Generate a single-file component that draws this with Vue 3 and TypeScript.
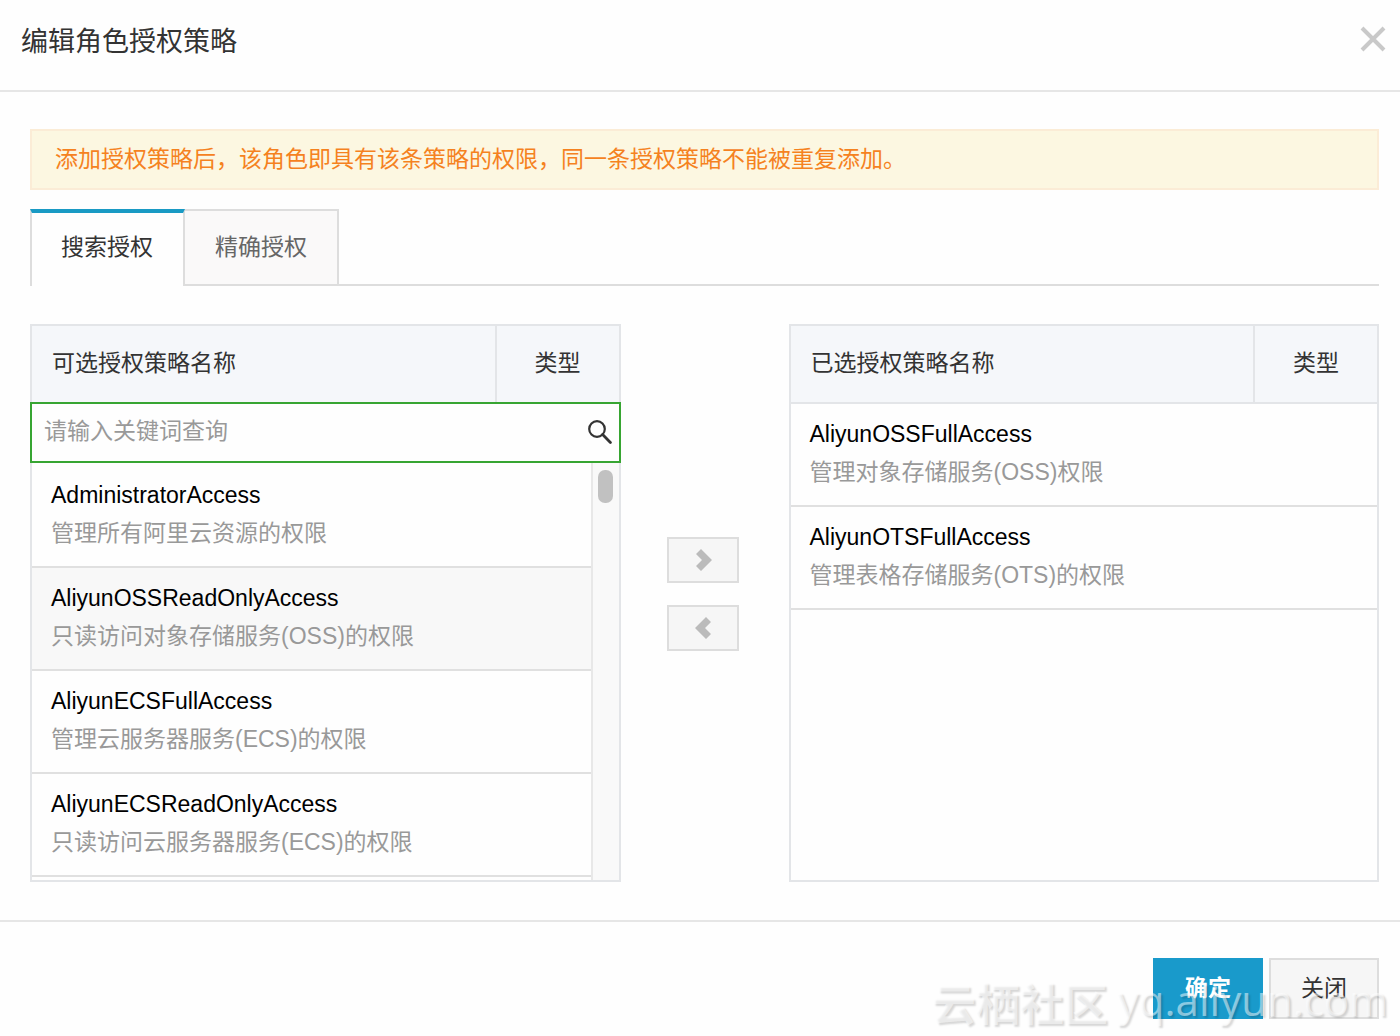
<script setup lang="ts">
import { ref } from 'vue'

interface Policy {
  name: string
  desc: string
}

const tabs: string[] = ['搜索授权', '精确授权']
const activeTab = ref(0)
const keyword = ref('')
const highlighted = ref('AliyunOSSReadOnlyAccess')

const available: Policy[] = [
  { name: 'AdministratorAccess', desc: '管理所有阿里云资源的权限' },
  { name: 'AliyunOSSReadOnlyAccess', desc: '只读访问对象存储服务(OSS)的权限' },
  { name: 'AliyunECSFullAccess', desc: '管理云服务器服务(ECS)的权限' },
  { name: 'AliyunECSReadOnlyAccess', desc: '只读访问云服务器服务(ECS)的权限' },
]

const selected: Policy[] = [
  { name: 'AliyunOSSFullAccess', desc: '管理对象存储服务(OSS)权限' },
  { name: 'AliyunOTSFullAccess', desc: '管理表格存储服务(OTS)的权限' },
]
</script>

<template>
  <div class="dialog" role="dialog" aria-labelledby="dialog-title">
    <header class="header">
      <h1 id="dialog-title">编辑角色授权策略</h1>
      <button class="close" type="button" aria-label="关闭窗口">
        <svg width="26" height="26" viewBox="0 0 26 26" fill="none" stroke="#c9c9c9" stroke-width="4">
          <path d="M2 2L24 24M24 2L2 24" />
        </svg>
      </button>
    </header>

    <main class="body">
      <p class="notice">添加授权策略后，该角色即具有该条策略的权限，同一条授权策略不能被重复添加。</p>

      <div class="tabs" role="tablist">
        <button
          v-for="(tab, i) in tabs"
          :key="tab"
          type="button"
          role="tab"
          :aria-selected="activeTab === i"
          :class="['tab', { active: activeTab === i }]"
          @click="activeTab = i"
        >{{ tab }}</button>
      </div>

      <div class="transfer">
        <section class="panel scrolling">
          <table>
            <thead>
              <tr>
                <th scope="col" class="name-col">可选授权策略名称</th>
                <th scope="col" class="type-col">类型</th>
              </tr>
              <tr>
                <td class="search" colspan="2">
                  <input v-model="keyword" type="text" placeholder="请输入关键词查询" aria-label="请输入关键词查询" />
                  <button type="button" class="search-btn" aria-label="查询">
                    <svg width="24" height="24" viewBox="0 0 24 24" fill="none" stroke="#333">
                      <circle cx="9" cy="9" r="7.8" stroke-width="2.2" />
                      <path d="M14.6 14.6L22.4 22.4" stroke-width="2.8" stroke-linecap="round" />
                    </svg>
                  </button>
                </td>
              </tr>
            </thead>
            <tbody>
              <tr v-for="p in available" :key="p.name" :class="{ hovered: p.name === highlighted }">
                <td class="policy">
                  <div class="policy-name">{{ p.name }}</div>
                  <div class="policy-desc">{{ p.desc }}</div>
                </td>
              </tr>
            </tbody>
          </table>
          <div class="track"><div class="thumb"></div></div>
        </section>

        <div class="moves">
          <button type="button" aria-label="添加">
            <svg width="18" height="22" viewBox="0 0 18 22" fill="#bbb">
              <path d="M7 0L18 11L7 22L2 17L8 11L2 5Z" />
            </svg>
          </button>
          <button type="button" aria-label="移除">
            <svg width="16" height="22" viewBox="0 0 16 22" fill="#bbb">
              <path d="M11 0L0 11L11 22L16 17L10 11L16 5Z" />
            </svg>
          </button>
        </div>

        <section class="panel">
          <table>
            <thead>
              <tr class="ruled">
                <th scope="col" class="name-col">已选授权策略名称</th>
                <th scope="col" class="type-col">类型</th>
              </tr>
            </thead>
            <tbody>
              <tr v-for="p in selected" :key="p.name">
                <td class="policy">
                  <div class="policy-name">{{ p.name }}</div>
                  <div class="policy-desc">{{ p.desc }}</div>
                </td>
              </tr>
            </tbody>
          </table>
        </section>
      </div>
    </main>

    <footer class="footer">
      <button type="button" class="btn primary">确定</button>
      <button type="button" class="btn">关闭</button>
    </footer>

    <div class="watermark"><span>云栖社区</span><span class="site">yq.aliyun.com</span></div>
  </div>
</template>

<style>
body {
  background: #fefefe;
}
</style>

<style scoped>
.dialog,
.dialog * {
  box-sizing: border-box;
}

.dialog {
  position: relative;
  overflow: hidden;
  color: #333;
  font-family: 'Liberation Sans', 'Noto Sans CJK SC', sans-serif;
  font-size: 23px;
  line-height: 38px;
}

button,
input {
  font: inherit;
  color: inherit;
  border: 0;
  padding: 0;
  margin: 0;
  background: none;
}

.header {
  display: flex;
  align-items: flex-start;
  justify-content: space-between;
  height: 92px;
  padding: 23px 14px 0 21px;
  border-bottom: 2px solid #e6e6e6;
}

h1 {
  margin: 0;
  font-size: 27px;
  line-height: 38px;
  font-weight: 400;
}

.close {
  display: flex;
  margin-top: 3px;
}

.body {
  padding: 37px 21px 38px 30px;
}

.notice {
  margin: 0 0 19px;
  padding: 9px 22px 10px 23px;
  border: 2px solid #fbecd6;
  background: #fcf7e1;
  color: #f5821f;
}

.tabs {
  display: flex;
  height: 77px;
  border-bottom: 2px solid #ddd;
}

.tab {
  height: 75px;
  padding: 0 30px 2px;
  border: 2px solid #ddd;
  border-width: 2px 2px 0 0;
  background: #faf9f9;
  color: #666;
}

.tab.active {
  height: 77px;
  padding: 0 30px 6px 29px;
  border-width: 4px 2px 0;
  border-top-color: #199ac4;
  background: #fefefe;
  color: #333;
}

.transfer {
  display: flex;
  margin-top: 38px;
}

.panel {
  flex: 1;
  display: grid;
  grid-template-columns: 1fr;
  grid-template-rows: auto 1fr;
  min-height: 558px;
  border: 2px solid #e3e5e8;
  background: #fefefe;
}

.panel.scrolling {
  grid-template-columns: 1fr 28px;
}

.panel table {
  display: contents;
}

thead {
  display: block;
  grid-column: 1 / -1;
}

thead tr {
  display: flex;
}

th {
  height: 76px;
  padding: 0;
  line-height: 74px;
  font-weight: 400;
  background: #f5f7fa;
}

.ruled {
  border-bottom: 2px solid #e3e5e8;
}

.name-col {
  flex: 1;
  padding-left: 20px;
  text-align: left;
}

.type-col {
  width: 124px;
  border-left: 2px solid #e3e5e8;
  text-align: center;
}

.search {
  flex: 1;
  display: flex;
  align-items: center;
  height: 61px;
  margin: 0 -2px;
  padding: 0 7px 2px 12px;
  border: 2px solid #37a532;
  background: #fefefe;
}

.search input {
  flex: 1;
  min-width: 0;
  height: 40px;
  outline: 0;
}

.search input::placeholder {
  color: #999;
  opacity: 1;
}

.search-btn {
  display: flex;
}

tbody {
  display: block;
}

tbody tr {
  display: block;
  height: 103px;
  border-bottom: 2px solid #e0e0e0;
}

.scrolling tbody {
  padding-top: 2px;
}

.hovered {
  background: #f8f8f8;
}

.policy {
  display: block;
  padding: 11px 19px 0;
}

.policy-name {
  color: #000;
}

.policy-desc {
  color: #999;
}

.track {
  padding: 7px 5px;
  border-left: 2px solid #e8e8e8;
  background: #f9f9f9;
}

.thumb {
  width: 15px;
  height: 33px;
  border-radius: 7px;
  background: #c1c1c1;
}

.moves {
  display: flex;
  flex-direction: column;
  align-items: center;
  gap: 22px;
  width: 168px;
  padding: 213px 3px 0 0;
}

.moves button {
  display: flex;
  align-items: center;
  justify-content: center;
  width: 72px;
  height: 46px;
  border: 2px solid #ddd;
  background: #f6f6f6;
}

.footer {
  display: flex;
  justify-content: flex-end;
  gap: 6px;
  padding: 36px 21px 17px;
  border-top: 2px solid #e6e6e6;
}

.btn {
  width: 110px;
  height: 61px;
  padding-bottom: 2px;
  border: 2px solid #ddd;
  background: #f6f6f6;
}

.primary {
  border-color: #199acb;
  background: #199acb;
  color: #fff;
  font-weight: 700;
}

.watermark {
  position: absolute;
  right: 12px;
  bottom: 4px;
  display: flex;
  gap: 10px;
  font-size: 44px;
  font-weight: 700;
  line-height: 52px;
  color: rgba(255, 255, 255, 0.5);
  text-shadow: 2px 2px 2px rgba(0, 0, 0, 0.16);
  pointer-events: none;
}

.site {
  font-family: 'Open Sans', sans-serif;
  font-size: 42px;
  font-weight: 400;
  line-height: 40px;
}
</style>
